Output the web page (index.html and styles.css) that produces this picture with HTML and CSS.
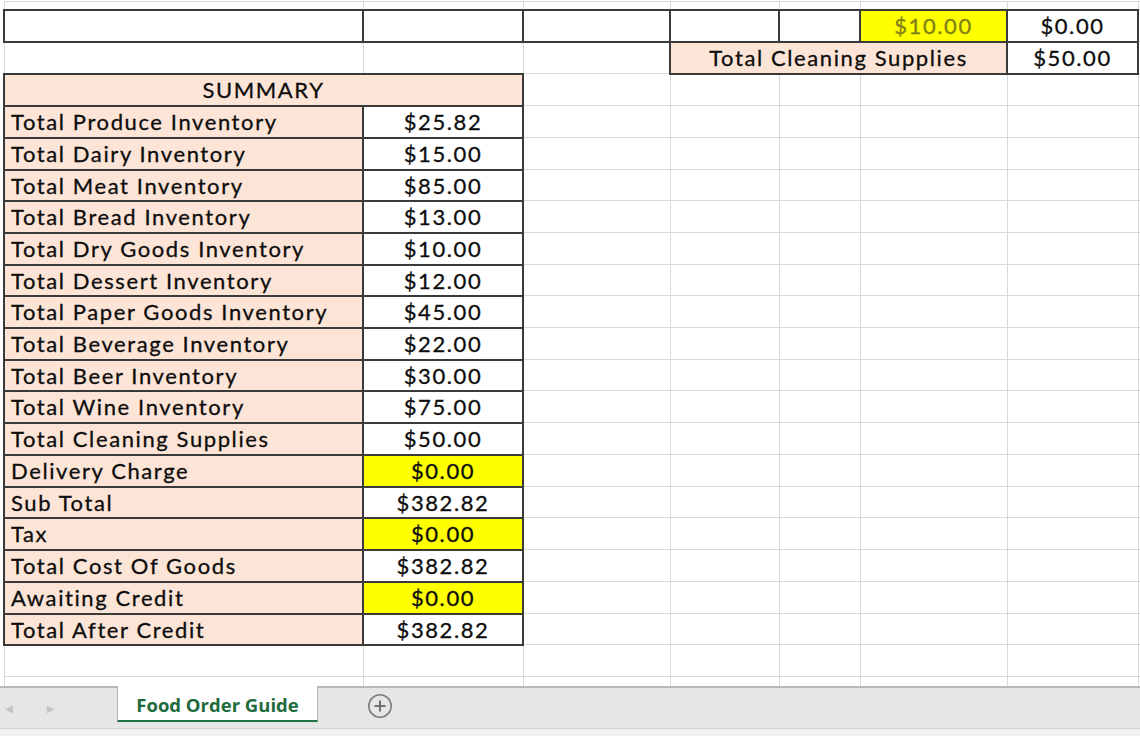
FILE: index.html
```html
<!DOCTYPE html>
<html>
<head>
<meta charset="utf-8">
<link rel="stylesheet" href="styles.css">
</head>
<body>
<div class="app">
  <div class="sheet">
    <table class="grid">
      <colgroup>
        <col class="ca"><col class="cb"><col class="cc"><col class="cd"><col class="ce"><col class="cf"><col class="cg"><col class="cr">
      </colgroup>
      <tr class="r0"><td></td><td></td><td></td><td></td><td></td><td></td><td></td><td></td></tr>
      <tr class="r32">
        <td class="dk"></td><td class="dk"></td><td class="dk"></td><td class="dk"></td><td class="dk"></td>
        <td class="dk yel num olive">$10.00</td><td class="dk num">$0.00</td><td></td>
      </tr>
      <tr class="r32">
        <td></td><td></td><td></td>
        <td class="dk peach ctr" colspan="3">Total Cleaning Supplies</td>
        <td class="dk num">$50.00</td><td></td>
      </tr>
      <tr class="r32">
        <td class="dk peach ctr" colspan="2">SUMMARY</td>
        <td></td><td></td><td></td><td></td><td></td><td></td>
      </tr>
      <tr class="r32"><td class="dk peach lbl">Total Produce Inventory</td><td class="dk num">$25.82</td><td></td><td></td><td></td><td></td><td></td><td></td></tr>
      <tr class="r32"><td class="dk peach lbl">Total Dairy Inventory</td><td class="dk num">$15.00</td><td></td><td></td><td></td><td></td><td></td><td></td></tr>
      <tr class="r31"><td class="dk peach lbl">Total Meat Inventory</td><td class="dk num">$85.00</td><td></td><td></td><td></td><td></td><td></td><td></td></tr>
      <tr class="r32"><td class="dk peach lbl">Total Bread Inventory</td><td class="dk num">$13.00</td><td></td><td></td><td></td><td></td><td></td><td></td></tr>
      <tr class="r32"><td class="dk peach lbl">Total Dry Goods Inventory</td><td class="dk num">$10.00</td><td></td><td></td><td></td><td></td><td></td><td></td></tr>
      <tr class="r31"><td class="dk peach lbl">Total Dessert Inventory</td><td class="dk num">$12.00</td><td></td><td></td><td></td><td></td><td></td><td></td></tr>
      <tr class="r32"><td class="dk peach lbl">Total Paper Goods Inventory</td><td class="dk num">$45.00</td><td></td><td></td><td></td><td></td><td></td><td></td></tr>
      <tr class="r32"><td class="dk peach lbl">Total Beverage Inventory</td><td class="dk num">$22.00</td><td></td><td></td><td></td><td></td><td></td><td></td></tr>
      <tr class="r31"><td class="dk peach lbl">Total Beer Inventory</td><td class="dk num">$30.00</td><td></td><td></td><td></td><td></td><td></td><td></td></tr>
      <tr class="r32"><td class="dk peach lbl">Total Wine Inventory</td><td class="dk num">$75.00</td><td></td><td></td><td></td><td></td><td></td><td></td></tr>
      <tr class="r32"><td class="dk peach lbl">Total Cleaning Supplies</td><td class="dk num">$50.00</td><td></td><td></td><td></td><td></td><td></td><td></td></tr>
      <tr class="r32"><td class="dk peach lbl">Delivery Charge</td><td class="dk num yel">$0.00</td><td></td><td></td><td></td><td></td><td></td><td></td></tr>
      <tr class="r31"><td class="dk peach lbl">Sub Total</td><td class="dk num">$382.82</td><td></td><td></td><td></td><td></td><td></td><td></td></tr>
      <tr class="r32"><td class="dk peach lbl">Tax</td><td class="dk num yel">$0.00</td><td></td><td></td><td></td><td></td><td></td><td></td></tr>
      <tr class="r32"><td class="dk peach lbl">Total Cost Of Goods</td><td class="dk num">$382.82</td><td></td><td></td><td></td><td></td><td></td><td></td></tr>
      <tr class="r32"><td class="dk peach lbl">Awaiting Credit</td><td class="dk num yel">$0.00</td><td></td><td></td><td></td><td></td><td></td><td></td></tr>
      <tr class="r31"><td class="dk peach lbl">Total After Credit</td><td class="dk num">$382.82</td><td></td><td></td><td></td><td></td><td></td><td></td></tr>
      <tr class="r32"><td></td><td></td><td></td><td></td><td></td><td></td><td></td><td></td></tr>
      <tr class="r32"><td></td><td></td><td></td><td></td><td></td><td></td><td></td><td></td></tr>
    </table>
  </div>
  <div class="tabbar">
    <div class="nav">
      <span class="arrow">&#9664;</span>
      <span class="arrow">&#9654;</span>
    </div>
    <div class="tab">Food Order Guide</div>
    <div class="add">
      <svg width="26" height="26" viewBox="0 0 26 26"><circle cx="13" cy="13" r="11.2" fill="none" stroke="#7d7d7d" stroke-width="1.6"/><path d="M13 7.5v11M7.5 13h11" stroke="#6f6f6f" stroke-width="2"/></svg>
    </div>
  </div>
  <div class="status"></div>
</div>
</body>
</html>
```
FILE: styles.css
```css
html, body {
  margin: 0;
  padding: 0;
  background: #ffffff;
}
.app {
  width: 1140px;
  height: 736px;
  display: flex;
  flex-direction: column;
  overflow: hidden;
}
.sheet {
  height: 686px;
  overflow: hidden;
  padding-left: 3px;
  flex: none;
}
.grid {
  border-collapse: collapse;
  table-layout: fixed;
  width: 1140px;
  font-family: Lato, "Liberation Sans", sans-serif;
  font-size: 22px;
  letter-spacing: 1.6px;
  color: #0d0d0d;
  -webkit-text-stroke: 0.3px currentColor;
  margin-top: 1px;
}
.ca { width: 359px; }
.cb { width: 160px; }
.cc { width: 147px; }
.cd { width: 109px; }
.ce { width: 81px; }
.cf { width: 147px; }
.cg { width: 131px; }
.cr { width: 6px; }
.grid td {
  border: 1px solid #d9d9d9;
  padding: 0 6px;
  white-space: nowrap;
  overflow: hidden;
  vertical-align: middle;
}
.r0 { height: 8px; }
.r32 { height: 32px; }
.r31 { height: 31px; }
.grid td.dk { border: 2px solid #3a3a3a; }
.peach { background: #fce4d6; }
.yel { background: #ffff00; }
.num, .ctr { text-align: center; }
.lbl { text-align: left; }
.olive { color: #7f7f14; }
.tabbar {
  flex: none;
  background: #e6e6e6;
  border-top: 2px solid #b8b8b8;
  border-bottom: 1px solid #d2d2d2;
  display: flex;
  align-items: stretch;
  box-sizing: border-box;
  height: 43px;
}
.nav {
  width: 117px;
  display: flex;
  align-items: center;
  gap: 34px;
  padding-left: 5px;
  box-sizing: border-box;
}
.arrow {
  color: #c4c4c4;
  font-size: 10px;
  font-family: "DejaVu Sans", sans-serif;
}
.tab {
  width: 201px;
  margin-top: -2px;
  height: 36px;
  padding-top: 3px;
  background: #ffffff;
  border-left: 1px solid #b8b8b8;
  border-right: 1px solid #b8b8b8;
  border-bottom: 2px solid #217346;
  box-sizing: border-box;
  display: flex;
  align-items: center;
  justify-content: center;
  font-family: "Open Sans", sans-serif;
  font-weight: 700;
  font-size: 18.5px;
  color: #1e6b3c;
}
.add {
  margin-left: 49px;
  display: flex;
  align-items: center;
  margin-top: -4px;
}
.status {
  flex: 1;
  background: #f1f1f1;
}
```
